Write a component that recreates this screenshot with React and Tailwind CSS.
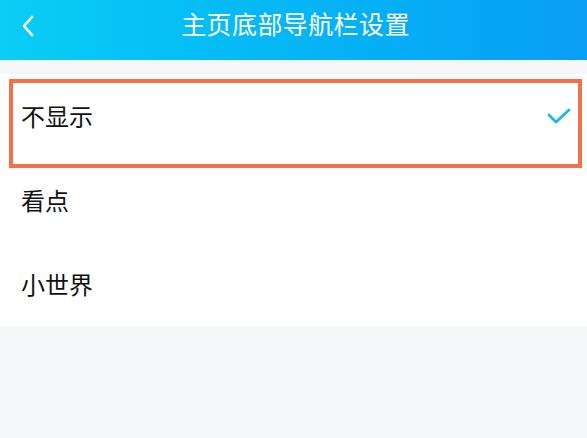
import React from 'react'

const items = ['不显示', '看点', '小世界']

export default function App() {
  return (
    <div
      className="w-[587px] h-[438px] bg-[#f5f6f8] overflow-hidden"
      style={{ fontFamily: '"Noto Sans CJK SC", "Noto Sans", sans-serif' }}
    >
      <div className="relative h-[60px] flex items-center justify-center bg-gradient-to-r from-[#0bcdf5] to-[#0a9ef5]">
        <svg className="absolute left-[20px] top-[15px]" width="16" height="22" viewBox="0 0 16 22">
          <path d="M12 2 L4 11 L12 20" fill="none" stroke="#fff" strokeWidth="2.6" strokeLinecap="round" strokeLinejoin="round" />
        </svg>
        <h1 className="text-white text-[25px] leading-none tracking-[0.4px] -mt-[13px] ml-[4px]">主页底部导航栏设置</h1>
      </div>

      <div className="mt-[14px] bg-white">
        {items.map((t, i) => (
          <div key={t} className="relative h-[84px] flex items-center pl-[21px] pr-[16px]">
            <span className="text-[24px] text-[#111] leading-none">{t}</span>
            {i === 0 && (
              <>
                <svg className="ml-auto" width="24" height="18" viewBox="0 0 24 18">
                  <path d="M2 8 L9 15 L22 3" fill="none" stroke="#1cb5ec" strokeWidth="2.8" strokeLinecap="round" strokeLinejoin="round" />
                </svg>
                <div className="absolute left-[9px] right-[5px] top-[5px] h-[89px] border-[4px] border-[#f0714a]" />
              </>
            )}
          </div>
        ))}
      </div>
    </div>
  )
}
